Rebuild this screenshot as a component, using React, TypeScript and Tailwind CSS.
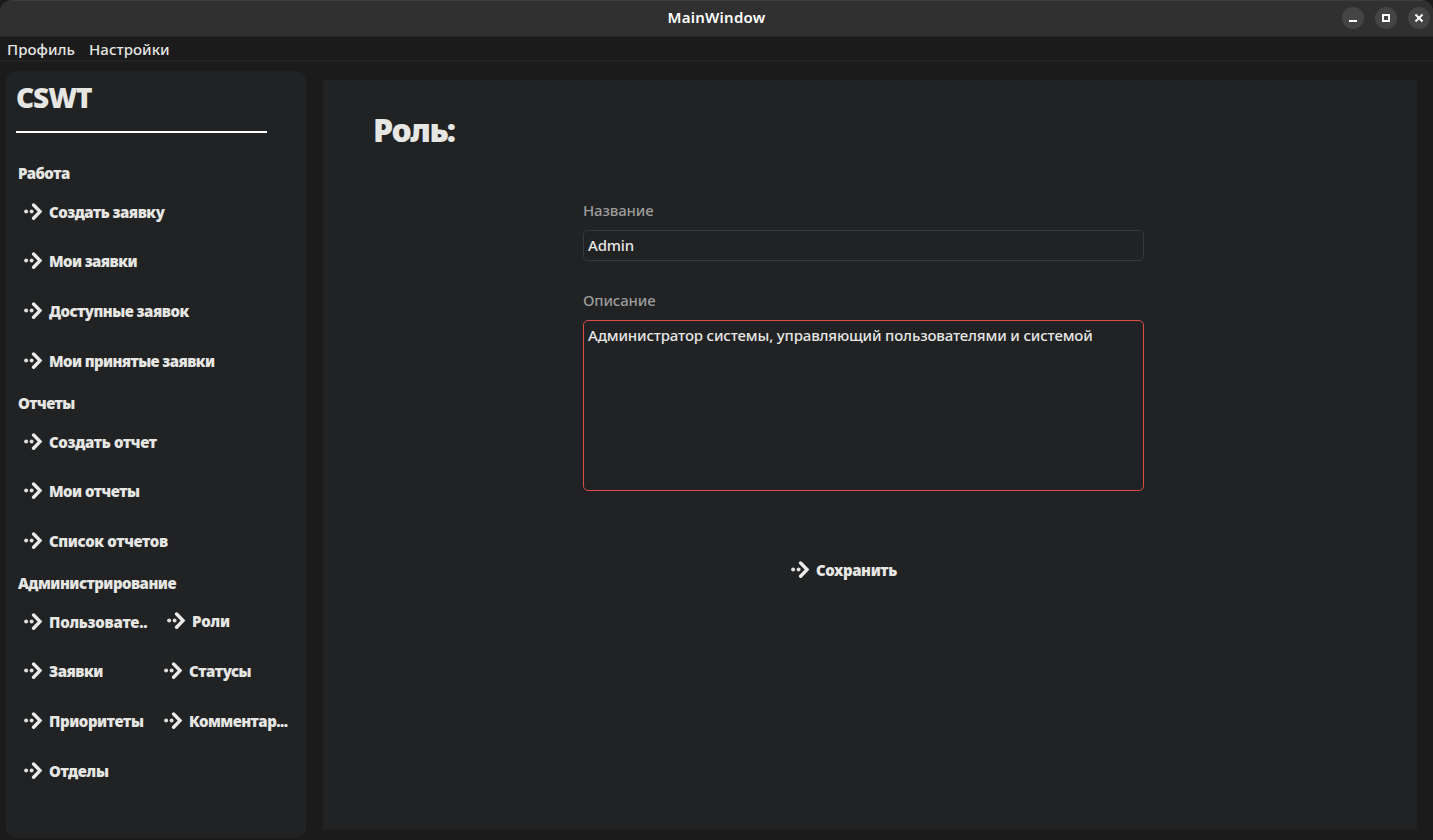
import type { ReactNode } from 'react';

function ArrowIcon() {
  return (
    <svg width="20" height="18" viewBox="0 0 20 18" className="shrink-0">
      <circle cx="2.1" cy="8.6" r="2" fill="#dededb" />
      <circle cx="7.6" cy="8.6" r="2" fill="#dededb" />
      <path d="M9.6 2 L16 8.6 L9.6 15.2" fill="none" stroke="#ebebe8" strokeWidth="3.4" strokeLinecap="round" strokeLinejoin="miter" />
    </svg>
  );
}

function NavItem({ children, className = 'h-[50px] w-[140px] pl-2' }: { children: ReactNode; className?: string }) {
  return (
    <button className={`flex items-center text-left ${className}`}>
      <ArrowIcon />
      <span className="pl-[5px] whitespace-nowrap">{children}</span>
    </button>
  );
}

function SectionTitle({ children }: { children: ReactNode }) {
  return <h2 className="flex h-[31px] items-center pt-1 pl-0.5">{children}</h2>;
}

function Sidebar() {
  return (
    <aside className="h-[767px] w-[300px] rounded-[10px] bg-[#202224] pl-2.5 text-[15px] font-black tracking-[-0.52px]">
      <div className="h-[62px] w-[251px] border-b-2 border-white text-[28px] leading-[53px] tracking-[-1.1px]">CSWT</div>
      <div className="h-[23px]" />
      <nav>
        <SectionTitle>Работа</SectionTitle>
        <NavItem className="h-[49px] w-[280px] pl-2 pt-px">Создать заявку</NavItem>
        <NavItem className="h-[50px] w-[280px] pl-2 tracking-[-0.6px]">Мои заявки</NavItem>
        <NavItem>Доступные заявок</NavItem>
        <NavItem className="h-[50px] w-[280px] pl-2 tracking-[-0.6px]">Мои принятые заявки</NavItem>
        <SectionTitle>Отчеты</SectionTitle>
        <NavItem className="h-[49px] w-[280px] pl-2 pt-px tracking-[-0.35px]">Создать отчет</NavItem>
        <NavItem>Мои отчеты</NavItem>
        <NavItem className="h-[50px] w-[280px] pl-2 tracking-[-0.36px]">Список отчетов</NavItem>
        <SectionTitle>Администрирование</SectionTitle>
        <div className="flex">
          <NavItem className="h-[49px] w-[140px] pl-2 pt-px tracking-[-0.25px]">Пользовате..</NavItem>
          <NavItem className="h-[48px] w-[140px] pl-[11px] tracking-[-0.2px]">Роли</NavItem>
        </div>
        <div className="flex">
          <NavItem>Заявки</NavItem>
          <NavItem className="h-[50px] w-[140px] pl-2 tracking-[-0.45px]">Статусы</NavItem>
        </div>
        <div className="flex">
          <NavItem className="h-[50px] w-[140px] pl-2 tracking-[-0.4px]">Приоритеты</NavItem>
          <NavItem>Комментар...</NavItem>
        </div>
        <NavItem className="h-[50px] w-[140px] pl-2 tracking-[-0.3px]">Отделы</NavItem>
      </nav>
    </aside>
  );
}

function TitleBar() {
  return (
    <header className="grid h-[37px] grid-cols-[1fr_auto_1fr] items-center rounded-t-[12px] border-t border-b border-t-[#3d3d3d] border-b-[#262626] bg-[#303030] pb-px">
      <span />
      <span className="pb-px text-[15px] font-semibold tracking-[0.25px] text-white">MainWindow</span>
      <div className="flex justify-end gap-[11px] pr-[3px]">
        <button className="rounded-full bg-[#444444]">
          <svg width="22" height="22" viewBox="0 0 22 22"><path d="M7 14h8" stroke="#fff" strokeWidth="2" /></svg>
        </button>
        <button className="rounded-full bg-[#444444]">
          <svg width="22" height="22" viewBox="0 0 22 22"><path d="M8 8h6v6h-6z" fill="none" stroke="#fff" strokeWidth="2" /></svg>
        </button>
        <button className="rounded-full bg-[#444444]">
          <svg width="22" height="22" viewBox="0 0 22 22"><path d="M7.5 7.5l7 7M14.5 7.5l-7 7" stroke="#fff" strokeWidth="2" /></svg>
        </button>
      </div>
    </header>
  );
}

export default function App() {
  return (
    <div className="h-[840px] w-[1433px] overflow-hidden bg-[#1b1b1b] font-['Noto_Sans',sans-serif] text-[15px] font-medium tracking-[-0.16px] text-[#e6e6e3]">
      <TitleBar />
      <div className="flex h-[25px] items-center gap-[14px] border-b-2 border-[#222222] pt-0.5 pl-[7px] tracking-[0.05px]">
        <span>Профиль</span>
        <span>Настройки</span>
      </div>
      <div className="flex pl-1.5 pt-[9px]">
        <Sidebar />
        <main className="mt-[9px] ml-[17px] h-[749px] w-[1094px] bg-[#202224]">
          <h1 className="h-[119px] pl-[50px] text-[32px] leading-[100px] font-black tracking-[-1.5px]">Роль:</h1>
          <div className="ml-[260px] flex w-[561px] flex-col">
            <label className="h-[31px] leading-[23px] text-[#9b9c9c]">Название</label>
            <div className="h-[31px] rounded-[5px] border border-[#36383a] pl-1 leading-[29px]">Admin</div>
            <label className="mt-7 h-[31px] leading-[23px] text-[#9b9c9c]">Описание</label>
            <div className="h-[171px] rounded-[5px] border border-[#da4c46] pl-1 leading-[29px]">
              Администратор системы, управляющий пользователями и системой
            </div>
            <button className="mt-[54px] flex h-[50px] items-center pl-[208px] font-black tracking-[-0.4px]">
              <ArrowIcon />
              <span className="pl-[5px]">Сохранить</span>
            </button>
          </div>
        </main>
      </div>
    </div>
  );
}
